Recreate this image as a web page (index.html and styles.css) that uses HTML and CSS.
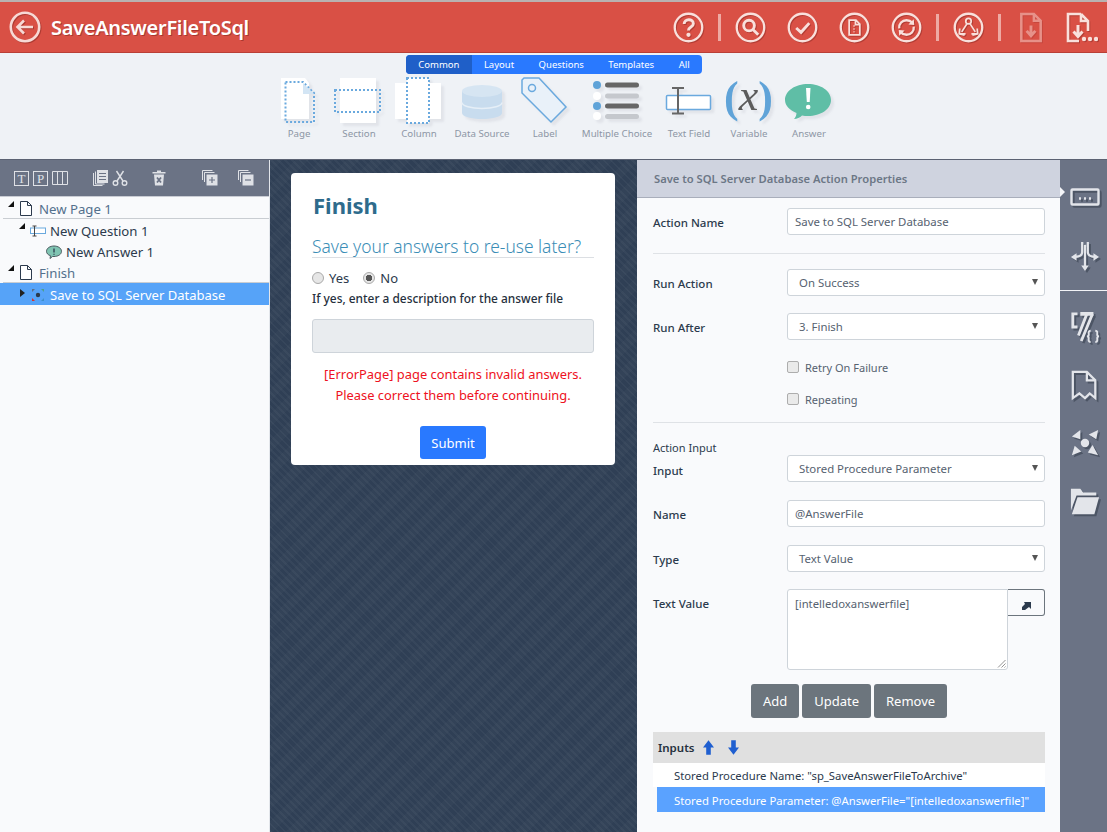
FILE: index.html
```html
<!DOCTYPE html>
<html lang="en">
<head>
    <meta charset="UTF-8">
    <meta name="viewport" content="width=device-width, initial-scale=1.0">
    <title>SaveAnswerFileToSql</title>
    <link rel="stylesheet" href="styles.css">
</head>
<body>
    <header class="top-bar">
        <svg class="back-icon" viewBox="0 0 32 32" width="32" height="32"><circle cx="16" cy="16" r="14.2"/><path d="M24 16H9M15 9.5 8.5 16l6.5 6.5"/></svg>
        <div class="app-title">SaveAnswerFileToSql</div>
        <div class="top-actions">
            <svg class="top-icon" viewBox="0 0 32 32"><circle cx="16" cy="16" r="14.2"/><path class="bold" d="M11.5 12.5c0-6 9.5-6 9.500-.3 0 3.500-5 3.200-5 6.800"/><circle class="fill" cx="16" cy="23.5" r="2.200"/></svg>
            <span class="top-sep"></span>
            <svg class="top-icon" viewBox="0 0 32 32"><circle cx="16" cy="16" r="14.2"/><circle class="bold" cx="14.5" cy="14" r="5.500"/><path class="bold" d="m18.5 18 5.500 5.500"/></svg>
            <svg class="top-icon gap" viewBox="0 0 32 32"><circle cx="16" cy="16" r="14.2"/><path class="bold" d="m9.5 16.5 5 4.500 8.500-9.500"/></svg>
            <svg class="top-icon gap" viewBox="0 0 32 32"><circle cx="16" cy="16" r="14.2"/><path class="thin" d="M10.5 8.5h7l4 4v11h-11zM17 8.500v4.500h4.500M15.500 14v1M15.500 17v1M15.500 20v1"/></svg>
            <svg class="top-icon gap" viewBox="0 0 32 32"><circle cx="16" cy="16" r="14.2"/><path d="M8.5 17c-.5-5 3-8.500 7.500-8.500 2.500 0 4.500 1 6 2.500M23.500 15c.5 5-3 8.500-7.500 8.500-2.500 0-4.500-1-6-2.500"/><path class="fill" d="m23.5 7.500.5 6-6-.5zM8.500 24.500 8 18.500l6 .5z"/></svg>
            <span class="top-sep"></span>
            <svg class="top-icon" viewBox="0 0 32 32"><circle cx="16" cy="16" r="14.2"/><circle class="thin" cx="16" cy="9.5" r="2.800"/><path class="thin" d="M14.5 12 9 20.500M17.500 12l5.500 8.500M13 22.500H7.500M19 22.500h5.500M7 17l-.5 5.500L12 24M25 17l.5 5.500L20 24"/></svg>
            <span class="top-sep"></span>
            <svg class="top-icon file faded" viewBox="0 0 24 32"><path class="file-line" d="M2 2h13l7 7v21H2zM15 2v7h7"/><path class="bold" d="M12 14v10M7.500 19.500 12 24.500l4.500-5"/></svg>
            <svg class="top-icon file more" viewBox="0 0 32 31"><path class="file-line" d="M15 2H2v27h11M15 2v7h7M15 2l7 7v10"/><path class="bold" d="M12 13v11M7.500 19.500 12 24.500l4.500-5"/><circle class="fill" cx="18" cy="27" r="2.200"/><circle class="fill" cx="24" cy="27" r="2.200"/><circle class="fill" cx="30" cy="27" r="2.200"/></svg>
        </div>
    </header>

    <section class="toolbox">
        <nav class="tool-tabs">
            <a class="tool-tab active">Common</a>
            <a class="tool-tab">Layout</a>
            <a class="tool-tab">Questions</a>
            <a class="tool-tab">Templates</a>
            <a class="tool-tab">All</a>
        </nav>
        <div class="tool-grid">
            <div class="tool">
                <svg class="tool-icon" viewBox="0 0 60 48" width="60" height="48"><path class="paper" d="M12 1h24l4 5v36H12z"/><path class="dots" d="M16.5 5H34l11 11v29H16.500z"/><path class="fold" d="M34 6 45 17H34z"/></svg>
                <span>Page</span>
            </div>
            <div class="tool">
                <svg class="tool-icon" viewBox="0 0 60 48" width="60" height="48"><path class="paper" d="M11 1h36v45H11z"/><path class="dots" d="M6 13h45v22H6z"/></svg>
                <span>Section</span>
            </div>
            <div class="tool">
                <svg class="tool-icon" viewBox="0 0 60 48" width="60" height="48"><path class="paper" d="M6 6h46v36H6z"/><path class="paper" d="M18 1h22v45H18z"/><path class="dots" d="M18 1h22v45H18z"/></svg>
                <span>Column</span>
            </div>
            <div class="tool">
                <svg class="tool-icon" viewBox="0 0 66 48" width="66" height="48"><path class="db-side" d="M13 14v22c0 3.500 9 6 20 6s20-2.500 20-6V14z"/><ellipse class="db-top" cx="33" cy="14" rx="20" ry="6"/><path class="db-band" d="M13 25.500c0 3.500 9 6 20 6s20-2.500 20-6"/></svg>
                <span>Data Source</span>
            </div>
            <div class="tool">
                <svg class="tool-icon" viewBox="0 0 60 48" width="60" height="48"><path class="tag" d="M9 1h15l27 29-15 15L7 16V3z"/><circle class="tag" cx="17" cy="11" r="3.500"/></svg>
                <span>Label</span>
            </div>
            <div class="tool">
                <svg class="tool-icon" viewBox="0 0 84 48" width="84" height="48">
                    <circle class="mc-on" cx="22" cy="8" r="4"/><circle class="mc-off" cx="22" cy="19" r="4"/><circle class="mc-on" cx="22" cy="29" r="4"/><circle class="mc-off" cx="22" cy="39" r="4"/>
                    <rect class="mc-dark" x="30" y="5.5" width="34" height="5" rx="2.500"/><rect class="mc-light" x="30" y="16.5" width="34" height="5" rx="2.500"/><rect class="mc-dark" x="30" y="26.5" width="34" height="5" rx="2.500"/><rect class="mc-light" x="30" y="37" width="34" height="5" rx="2.500"/>
                </svg>
                <span>Multiple Choice</span>
            </div>
            <div class="tool">
                <svg class="tool-icon" viewBox="0 0 60 48" width="60" height="48"><rect class="tf-box" x="7.5" y="18.5" width="44" height="14" rx="1"/><path class="tf-beam" d="M13 11h12M13 36.500h12M19 11v25.500"/></svg>
                <span>Text Field</span>
            </div>
            <div class="tool">
                <svg class="tool-icon" viewBox="0 0 60 48" width="60" height="48"><text class="var-text" x="5" y="35"><tspan class="var-paren">(</tspan><tspan class="var-x" dy="-2">x</tspan><tspan class="var-paren" dy="2">)</tspan></text></svg>
                <span>Variable</span>
            </div>
            <div class="tool">
                <svg class="tool-icon" viewBox="0 0 60 48" width="60" height="48"><path class="bubble" d="M29 7c13 0 23 7 23 16s-10 16-23 16c-2 0-4 0-6-.5-2 2-5 3.500-8 3.500 1.500-1.500 2.500-4 2.500-6C10.500 33 6 28.500 6 23 6 14 16 7 29 7z"/><path class="bang" d="M27 11h4.500l-.8 14h-2.900z"/><circle class="bang" cx="29.2" cy="30" r="2.300"/></svg>
                <span>Answer</span>
            </div>
        </div>
    </section>

    <main class="workspace">
        <aside class="outline">
            <div class="outline-tools">
                <span class="box-icon">T</span>
                <span class="box-icon">P</span>
                <svg class="tool-mini columns" viewBox="0 0 16 16"><path d="M.5 1.500h15v13H.5zM5.500 1.500v13M10.500 1.500v13"/></svg>
                <svg class="tool-mini copy" viewBox="0 0 16 16"><path d="M.5 3v12.500h9"/><path d="M2.500 1.500v12.500h9"/><path class="solid" d="M4 0h11v13H4z"/><path class="mark" d="M6 3.500h7M6 6.500h7M6 9.500h7"/></svg>
                <svg class="tool-mini scissors" viewBox="0 0 16 16"><circle cx="3.5" cy="13" r="2.300"/><circle cx="12.5" cy="13" r="2.300"/><path d="M5 11 11.500 1M11 11 4.500 1"/></svg>
                <svg class="tool-mini trash" viewBox="0 0 16 16"><path class="solid" d="M3 4.500h10l-1 11H4z"/><path class="solid" d="M1.500 2h13v1.500h-13zM6 .5h4V2H6z"/><path class="mark bold-mark" d="m6 7.500 4 5M10 7.500l-4 5"/></svg>
                <svg class="tool-mini stack" viewBox="0 0 16 16"><path d="M.5 10V.5h10M2.500 12V2.500h10"/><path class="solid" d="M4.500 4.500h11v11h-11z"/><path class="mark" d="M10 7v6M7 10h6"/></svg>
                <svg class="tool-mini stack last" viewBox="0 0 16 16"><path d="M.5 10V.5h10M2.500 12V2.500h10"/><path class="solid" d="M4.500 4.500h11v11h-11z"/><path class="mark" d="M7 10h6"/></svg>
            </div>
            <ul class="tree">
                <li class="tree-row page-row">
                    <span class="twist open"></span>
                    <svg class="tree-page" viewBox="0 0 12 15"><path d="M.5.500h7l4 4v10H.5zM7.500.5v4h4"/></svg>
                    <span class="node-page">New Page 1</span>
                </li>
                <li class="tree-row question-row">
                    <span class="twist open"></span>
                    <svg class="tree-q" viewBox="0 0 16 12"><rect x=".5" y="3" width="15" height="5.500"/><path d="M2.500 1h4M2.500 11h4M4.500 1v10"/></svg>
                    <span>New Question 1</span>
                </li>
                <li class="tree-row answer-row">
                    <svg class="tree-a" viewBox="0 0 16 14"><path d="M8 1c4 0 7.500 2.200 7.500 5.300S12 11.500 8 11.500H6.500L4 13.500l.5-2.800C2 10 .5 8.300.5 6.300.5 3.200 4 1 8 1z"/><path class="bang-mini" d="M8 3.500v4M8 8.800v1"/></svg>
                    <span>New Answer 1</span>
                </li>
                <li class="tree-row page-row">
                    <span class="twist open"></span>
                    <svg class="tree-page" viewBox="0 0 12 15"><path d="M.5.500h7l4 4v10H.5zM7.500.5v4h4"/></svg>
                    <span class="node-page">Finish</span>
                </li>
                <li class="tree-row action-row">
                    <span class="twist closed"></span>
                    <svg class="tree-act" viewBox="0 0 14 14"><circle cx="7" cy="7" r="2.200" fill="#2b3a4c"/><path d="M1 1h3l-3 3z" fill="#5b6f86"/><path d="M13 1v3l-3-3z" fill="#4c9f8e"/><path d="M1 13v-3l3 3z" fill="#d8322c"/><path d="M13 13h-3l3-3z" fill="#3f8fc9"/></svg>
                    <span>Save to SQL Server Database</span>
                </li>
            </ul>
        </aside>

        <section class="preview">
            <div class="form-card">
                <h2 class="card-title">Finish</h2>
                <h3 class="card-question">Save your answers to re-use later?</h3>
                <div class="radio-row">
                    <span class="radio"></span><span class="radio-label">Yes</span>
                    <span class="radio checked"></span><span class="radio-label">No</span>
                </div>
                <div class="card-hint">If yes, enter a description for the answer file</div>
                <div class="card-input"></div>
                <p class="card-error">[ErrorPage] page contains invalid answers.<br>Please correct them before continuing.</p>
                <div class="card-submit"><button class="btn-submit">Submit</button></div>
            </div>
        </section>

        <section class="props">
            <div class="props-head">Save to SQL Server Database Action Properties</div>
            <div class="props-body">
                <div class="field-row first">
                    <label>Action Name</label>
                    <div class="control">Save to SQL Server Database</div>
                </div>
                <hr class="rule rule-a">
                <div class="field-row">
                    <label>Run Action</label>
                    <div class="control select">On Success</div>
                </div>
                <div class="field-row next">
                    <label>Run After</label>
                    <div class="control select">3. Finish</div>
                </div>
                <div class="check-row"><span class="check"></span>Retry On Failure</div>
                <div class="check-row second"><span class="check"></span>Repeating</div>
                <hr class="rule rule-b">
                <div class="input-title">Action Input</div>
                <div class="field-row tight">
                    <label>Input</label>
                    <div class="control select">Stored Procedure Parameter</div>
                </div>
                <div class="field-row wide">
                    <label>Name</label>
                    <div class="control">@AnswerFile</div>
                </div>
                <div class="field-row wide">
                    <label>Type</label>
                    <div class="control select">Text Value</div>
                </div>
                <div class="field-row next text-row">
                    <label>Text Value</label>
                    <div class="text-area">[intelledoxanswerfile]
                        <svg class="grip" viewBox="0 0 9 9"><path d="M8.500 1 1 8.500M8.500 4.500l-4 4M8.500 7.500l-1 1"/></svg>
                    </div>
                    <button class="expand-btn"><svg viewBox="0 0 10 10" width="10" height="10"><path d="M3 1h7v7L8 6 4 9H1V6l3-3z"/></svg></button>
                </div>
                <div class="btn-row">
                    <button class="btn-grey">Add</button>
                    <button class="btn-grey">Update</button>
                    <button class="btn-grey">Remove</button>
                </div>
                <div class="inputs-head">
                    <span>Inputs</span>
                    <svg class="move" viewBox="0 0 12 16"><path d="M6 0l6 8H8.500v8h-5V8H0z"/></svg>
                    <svg class="move down" viewBox="0 0 12 16"><path d="M6 16l6-8H8.500V0h-5v8H0z"/></svg>
                </div>
                <div class="input-item">Stored Procedure Name: "sp_SaveAnswerFileToArchive"</div>
                <div class="input-item selected">Stored Procedure Parameter: @AnswerFile="[intelledoxanswerfile]"</div>
            </div>
        </section>

        <aside class="side-rail">
            <span class="rail-notch"></span>
            <div class="rail-group">
                <svg class="rail-icon" viewBox="0 0 30 20"><rect x="1.5" y="1.5" width="27" height="15" rx="1"/><path class="rail-dots" d="M9 10.500h2M14 10.500h2M19 10.500h2"/></svg>
                <svg class="rail-icon tall" viewBox="0 0 32 32"><path d="M13 1v11c0 4-3 5-9 5M19 1v11c0 4 3 5 9 5M16 4v25"/><path class="rail-fill" d="M1 17l6-4v8zM31 17l-6-4v8zM16 32l-4-6h8z"/></svg>
            </div>
            <div class="rail-group lower">
                <svg class="rail-icon tall" viewBox="0 0 32 34"><path class="rail-bold" d="M8 3H3v14h5"/><path class="rail-bold" d="M24 3 12 32M18 3 9 26"/><path class="rail-fill" d="M11 1h14v4H11z"/><path class="rail-thin" d="M22 21c-3 0-2 3-2 4s-1 2-2 2c1 0 2 1 2 2s-1 4 2 4M27 21c3 0 2 3 2 4s1 2 2 2c-1 0-2 1-2 2s1 4-2 4"/></svg>
                <svg class="rail-icon tall" viewBox="0 0 32 32"><path d="M3 2h15l9 9v19l-6-5-5 5-6-5-7 5zM18 2v9h9"/></svg>
                <svg class="rail-icon tall" viewBox="0 0 32 32"><circle class="rail-fill" cx="16" cy="16" r="4.500"/><path class="rail-fill" d="M2 9 11 2v10zM30 2l-2 10-8-5zM2 29l3-10 7 6zM30 29l-11-3 5-8z"/></svg>
                <svg class="rail-icon tall" viewBox="0 0 32 30"><path class="rail-fill" d="M1 2h10l3 4h14v3H7L1 25z"/><path class="rail-fill" d="M8 11h23l-5 18H2z"/></svg>
            </div>
        </aside>
    </main>
</body>
</html>
```
FILE: styles.css
```css
* {
    box-sizing: border-box;
}

html, body {
    margin: 0;
    padding: 0;
    height: 832px;
    overflow: hidden;
    font-family: 'Noto Sans', 'Open Sans', sans-serif;
    background: #f9fafc;
    color: #2c3a4d;
}

/* top bar */
.top-bar {
    display: flex;
    align-items: center;
    height: 53px;
    border-top: 2px solid #b9b2b0;
    border-bottom: 1px solid #b93f36;
    background: #d95045;
    padding: 0 9px;
}

.back-icon {
    fill: none;
    stroke: #f7d9d5;
    stroke-width: 2.6;
    filter: drop-shadow(1px 1px 0 rgba(120, 30, 25, 0.45));
}

.app-title {
    margin-left: 10px;
    font-size: 20px;
    font-weight: 600;
    color: #fff;
    text-shadow: 1px 1px 0 rgba(120, 30, 25, 0.5);
    letter-spacing: -0.3px;
}

.top-actions {
    display: flex;
    align-items: center;
    margin-left: auto;
}

.top-icon {
    width: 31px;
    height: 31px;
    fill: none;
    stroke: #f9e0dc;
    stroke-width: 2.4;
    filter: drop-shadow(1px 1px 0 rgba(120, 30, 25, 0.4));
}

.top-icon.gap {
    margin-left: 21px;
}

.top-icon .thin {
    stroke-width: 1.8;
}

.top-icon .bold {
    stroke-width: 3;
}

.top-icon .file-line {
    stroke-width: 2.6;
}

.top-icon .fill {
    fill: #f9e0dc;
    stroke: none;
}

.top-icon.file {
    width: 24px;
}

.top-icon.faded {
    opacity: 0.45;
    margin-left: 4px;
    margin-right: 23px;
}

.top-icon.more {
    width: 32px;
}

.top-sep {
    width: 3px;
    height: 27px;
    margin: 0 14px;
    background: #eeaaa3;
}

/* toolbox */
.toolbox {
    height: 106px;
    padding-top: 2px;
    background: #eff2f6;
}

.tool-tabs {
    display: flex;
    width: 296px;
    height: 19px;
    margin-left: 406px;
    border-radius: 4px;
    overflow: hidden;
    background: #2979ff;
}

.tool-tab {
    padding: 0 12.25px;
    font-size: 9.5px;
    line-height: 19px;
    color: #fff;
}

.tool-tab.active {
    background: #1f5fc8;
}

.tool-grid {
    display: grid;
    grid-template-columns: 60px 60px 60px 66px 60px 84px 60px 60px 60px;
    margin-left: 269px;
    margin-top: 3px;
}

.tool {
    display: flex;
    flex-direction: column;
    align-items: center;
    font-size: 9.7px;
    color: #8d96a5;
}

.tool-icon {
    display: block;
    overflow: visible;
    margin-bottom: 2px;
    filter: drop-shadow(3px 3px 1px rgba(60, 70, 90, 0.08));
}

.paper {
    fill: #fff;
}

.dots {
    fill: none;
    stroke: #6aa9de;
    stroke-width: 2;
    stroke-dasharray: 2 2;
}

.fold {
    fill: #d3e5f4;
}

.db-side {
    fill: #c8dcee;
}

.db-top {
    fill: #d6e5f2;
}

.db-band {
    fill: none;
    stroke: #e6eff7;
    stroke-width: 1.5;
}

.tag {
    fill: #e9f1f9;
    stroke: #6aa9de;
    stroke-width: 1.5;
}

.mc-on {
    fill: #5fa3d8;
}

.mc-off {
    fill: #fff;
}

.mc-dark {
    fill: #666;
}

.mc-light {
    fill: #c5c8cd;
}

.tf-box {
    fill: #fff;
    stroke: #6aa9de;
    stroke-width: 1.5;
}

.tf-beam {
    fill: none;
    stroke: #666;
    stroke-width: 2;
}

.var-text {
    font-family: 'Liberation Serif', serif;
}

.var-paren {
    font-weight: 700;
    font-size: 44px;
    fill: #5fa3d8;
}

.var-x {
    font-style: italic;
    font-size: 44px;
    fill: #5c5c5c;
}

.bubble {
    fill: #5fbea6;
}

.bang {
    fill: #fff;
}

/* three columns and the rail */
.workspace {
    display: flex;
    height: 673px;
    border-top: 1px solid #5b6272;
}

.outline {
    width: 270px;
    flex: none;
    background: #f9fafc;
    border-right: 1px solid #e3e6eb;
}

.outline-tools {
    display: flex;
    align-items: center;
    height: 37px;
    padding-left: 14px;
    background: #6b7385;
    border-bottom: 1px solid #c9ccd4;
}

.box-icon {
    width: 15px;
    height: 15px;
    border: 1px solid #dfe1e6;
    color: #dfe1e6;
    font-family: 'Liberation Serif', serif;
    font-size: 13px;
    line-height: 13px;
    text-align: center;
    margin-right: 4px;
}

.tool-mini {
    width: 16px;
    height: 16px;
    fill: none;
    stroke: #dfe1e6;
    stroke-width: 1;
}

.tool-mini.copy {
    margin-left: 25px;
}

.tool-mini.scissors {
    margin-left: 3px;
    stroke-width: 1.4;
}

.tool-mini.trash {
    margin-left: 23px;
}

.tool-mini.stack {
    margin-left: 35px;
}

.tool-mini.stack.last {
    margin-left: 20px;
}

.tool-mini .solid {
    fill: #dfe1e6;
    stroke: none;
}

.tool-mini .mark {
    stroke: #6b7385;
    stroke-width: 1.2;
}

.tool-mini .bold-mark {
    stroke-width: 1.8;
}

.tree {
    list-style: none;
    margin: 0;
    padding: 0;
}

.tree-row {
    position: relative;
    display: flex;
    align-items: center;
    height: 21px;
    padding-top: 2px;
    font-size: 13.2px;
    color: #2c3a4d;
    white-space: nowrap;
}

.node-page {
    color: #53708c;
}

.page-row {
    height: 22px;
    margin-left: 3px;
    padding-left: 17px;
    border-bottom: 1px solid #c9cdd2;
}

.question-row {
    padding-left: 30px;
}

.answer-row {
    padding-left: 46px;
}

.action-row {
    height: 22px;
    padding-left: 31px;
    background: #56a3f8;
    color: #fff;
    font-size: 13px;
}

.twist {
    position: absolute;
    width: 0;
    height: 0;
}

.twist.open {
    left: 5px;
    top: 4px;
    border-style: solid;
    border-width: 0 0 6px 6px;
    border-color: transparent transparent #111 transparent;
}

.question-row .twist.open {
    left: 19px;
}

.twist.closed {
    left: 20px;
    top: 6px;
    border-style: solid;
    border-width: 4px 0 4px 5px;
    border-color: transparent transparent transparent #222;
}

.tree-page {
    width: 12px;
    height: 15px;
    margin-right: 7px;
    fill: #fff;
    stroke: #2c3a4d;
}

.tree-q {
    width: 16px;
    height: 12px;
    margin-right: 4px;
    fill: #fff;
    stroke: #6aa9de;
}

.tree-q path {
    stroke: #444;
    fill: none;
}

.tree-a {
    width: 16px;
    height: 14px;
    margin-right: 4px;
    fill: #7fc4b2;
    stroke: #4c5a60;
}

.tree-a .bang-mini {
    fill: none;
    stroke: #2c3a4d;
    stroke-width: 1.3;
}

.tree-act {
    width: 14px;
    height: 14px;
    margin-right: 5px;
}

/* preview */
.preview {
    width: 367px;
    flex: none;
    padding: 13px 21px;
    background-color: #2f3f55;
    background-image:
        repeating-linear-gradient(45deg, rgba(255, 255, 255, 0.035) 0 2px, transparent 2px 5px),
        repeating-linear-gradient(135deg, rgba(255, 255, 255, 0.018) 0 9px, transparent 9px 18px);
}

.form-card {
    width: 324px;
    height: 292px;
    padding: 14px 21px 0;
    background: #fff;
    border-radius: 4px;
}

.card-title {
    margin: 0 0 0 1px;
    font-size: 22px;
    line-height: 36px;
    font-weight: 700;
    color: #2e6b8c;
}

.card-question {
    margin: 11px 0 0;
    height: 24px;
    font-size: 17.4px;
    font-weight: 300;
    line-height: 24px;
    color: #3a8db6;
    border-bottom: 1px solid #dcdfe3;
    white-space: nowrap;
}

.radio-row {
    display: flex;
    align-items: center;
    height: 20px;
    margin-top: 10px;
    font-size: 13px;
}

.radio {
    width: 12px;
    height: 12px;
    border-radius: 50%;
    border: 1px solid #a9a9a9;
    background: #e6e6e6;
}

.radio.checked {
    background: radial-gradient(circle, #555 0 3px, #e6e6e6 3.5px);
}

.radio-label {
    margin: 0 14px 0 5px;
}

.card-hint {
    font-size: 11.9px;
    line-height: 20px;
    font-weight: 500;
    color: #26303d;
}

.card-input {
    height: 34px;
    margin-top: 11px;
    background: #e9ecef;
    border: 1px solid #ced4da;
    border-radius: 3px;
}

.card-error {
    margin: 11px 0 0;
    font-size: 12.9px;
    line-height: 21px;
    text-align: center;
    color: #ee1122;
}

.card-submit {
    text-align: center;
    margin-top: 20px;
}

.btn-submit {
    width: 66px;
    height: 33px;
    padding: 0;
    border: none;
    border-radius: 3px;
    background: #2979ff;
    color: #fff;
    font: 13px 'Noto Sans', sans-serif;
}

/* properties */
.props {
    width: 423px;
    flex: none;
}

.props-head {
    height: 38px;
    padding-left: 17px;
    font-size: 11.2px;
    font-weight: 600;
    line-height: 37px;
    color: #6c7786;
    background: #cfd3df;
    border-bottom: 1px solid #a9aebb;
}

.props-body {
    padding: 0 15px 0 16px;
}

.field-row {
    display: flex;
    align-items: flex-start;
    margin-top: 15px;
}

.field-row.first {
    margin-top: 10px;
}

.field-row.next {
    margin-top: 17px;
}

.field-row.wide {
    margin-top: 18px;
}

.field-row.tight {
    margin-top: 0;
}

.field-row label {
    width: 134px;
    flex: none;
    padding-top: 6px;
    font-size: 11.5px;
    line-height: 18px;
    font-weight: 500;
    color: #2c3a4d;
}

.field-row.tight label {
    padding-top: 7px;
}

.control {
    position: relative;
    width: 258px;
    height: 27px;
    padding-left: 7px;
    font-size: 11.4px;
    line-height: 25px;
    color: #566270;
    background: #fff;
    border: 1px solid #ced4da;
    border-radius: 3px;
}

.control.select {
    padding-left: 11px;
}

.control.select::after {
    content: "";
    position: absolute;
    right: 6px;
    top: 9px;
    border-style: solid;
    border-width: 6px 3px 0;
    border-color: #555 transparent transparent;
}

.rule {
    height: 1px;
    border: 0;
    margin: 0;
    background: #dfe2e6;
}

.rule-a {
    margin-top: 18px;
}

.check-row {
    display: flex;
    align-items: center;
    height: 18px;
    margin-top: 18px;
    margin-left: 134px;
    font-size: 11px;
    color: #566270;
}

.check-row.second {
    margin-top: 14px;
}

.check {
    width: 12px;
    height: 12px;
    margin-right: 6px;
    background: #eaeaea;
    border: 1px solid #adadad;
    border-radius: 2px;
}

.rule-b {
    margin-top: 14px;
}

.input-title {
    margin-top: 17px;
    height: 15px;
    font-size: 11px;
    line-height: 16px;
    color: #2c3a4d;
}

.text-row {
    height: 81px;
}

.text-area {
    position: relative;
    width: 221px;
    height: 81px;
    padding: 4px 7px;
    font-size: 11.3px;
    line-height: 20px;
    color: #566270;
    background: #fff;
    border: 1px solid #ced4da;
    border-radius: 3px 0 3px 3px;
}

.grip {
    position: absolute;
    right: 1px;
    bottom: 1px;
    width: 9px;
    height: 9px;
    fill: none;
    stroke: #777;
    stroke-width: 0.8;
}

.expand-btn {
    width: 37px;
    height: 27px;
    padding: 8px 0 0;
    background: #f9fafc;
    border: 1px solid #6c757d;
    border-left: 0;
    border-radius: 0 3px 3px 0;
}

.expand-btn svg {
    fill: #2c3a4d;
}

.btn-row {
    display: flex;
    justify-content: center;
    gap: 3px;
    margin-top: 14px;
}

.btn-grey {
    height: 34px;
    padding: 0 12px;
    border: none;
    border-radius: 3px;
    background: #6c757d;
    color: #fff;
    font: 13px 'Noto Sans', sans-serif;
}

.inputs-head {
    display: flex;
    align-items: center;
    height: 31px;
    margin-top: 14px;
    padding-left: 5px;
    font-size: 11.5px;
    font-weight: 600;
    color: #26303d;
    background: #e0e0e0;
}

.move {
    width: 11px;
    height: 15px;
    margin-left: 9px;
    fill: #1f5fd0;
}

.move.down {
    margin-left: 14px;
}

.input-item {
    height: 24px;
    padding-left: 21px;
    font-size: 11.3px;
    line-height: 26px;
    color: #2c3a4d;
    background: #fff;
    white-space: nowrap;
}

.input-item.selected {
    height: 25px;
    margin-left: 4px;
    padding-left: 17px;
    line-height: 27px;
    color: #fff;
    background: #5aa2ff;
}

/* right rail */
.side-rail {
    position: relative;
    flex: 1;
    background: #6b7385;
}

.rail-notch {
    position: absolute;
    left: 0;
    top: 27px;
    border-style: solid;
    border-width: 5px 0 5px 5px;
    border-color: transparent transparent transparent #f5f6f9;
}

.rail-group {
    display: flex;
    flex-direction: column;
    align-items: center;
    gap: 32px;
    height: 131px;
    padding: 28px 0 0 3px;
    border-bottom: 1px solid #f2f3f6;
}

.rail-group.lower {
    height: auto;
    gap: 26px;
    padding-top: 20px;
    border-bottom: 0;
}

.rail-icon {
    width: 30px;
    height: 20px;
    fill: none;
    stroke: #e3e5ea;
    stroke-width: 2.4;
    filter: drop-shadow(2px 2px 0 rgba(40, 48, 62, 0.45));
}

.rail-icon.tall {
    height: 32px;
}

.rail-fill {
    fill: #e3e5ea;
    stroke: none;
}

.rail-thin {
    stroke-width: 2;
}

.rail-bold {
    stroke-width: 3;
}
```
